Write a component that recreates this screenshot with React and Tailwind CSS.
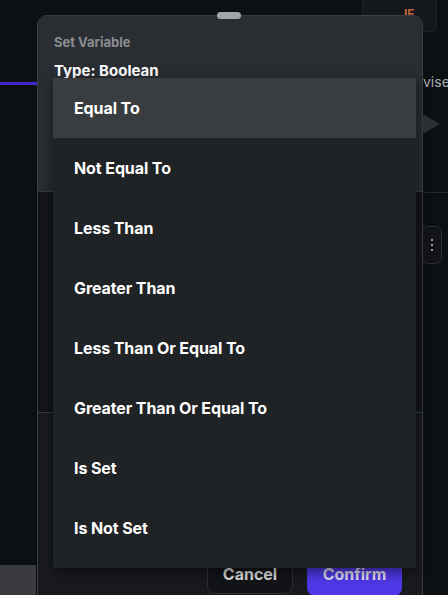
import React from 'react';

const OPTIONS = [
  'Equal To',
  'Not Equal To',
  'Less Than',
  'Greater Than',
  'Less Than Or Equal To',
  'Greater Than Or Equal To',
  'Is Set',
  'Is Not Set',
];

const App = () => {
  return (
    <div className="relative w-[448px] h-[595px] overflow-hidden bg-[#0d1013] font-['Inter',sans-serif]">
      {/* background page bits peeking out */}
      <div className="absolute left-0 top-[82px] w-[37px] h-[3px] bg-[#4328c9]" />
      <div className="absolute left-0 top-[565px] w-[36px] h-[30px] bg-[#3a3b3e]" />
      <div className="absolute left-[362px] top-0 w-[75px] h-[32px] rounded-b-md border-x border-b border-[#1f2226] bg-[#15181b]">
        <span className="absolute left-[41px] top-[5px] text-[12px] font-bold text-[#c2643f]">IF</span>
      </div>
      <span className="absolute left-[423px] top-[71px] text-[14px] text-[#a9abae]">vise</span>
      <div className="absolute left-[412px] top-[108px] w-0 h-0 border-y-[16px] border-y-transparent border-l-[28px] border-l-[#2c2f33]" />
      <div className="absolute left-[422px] top-[226px] w-[20px] h-[38px] rounded-md border border-[#2a2d31] bg-[#121417] flex flex-col items-center justify-center gap-[3px]">
        <span className="w-[2px] h-[2px] bg-[#9a9c9f]" />
        <span className="w-[2px] h-[2px] bg-[#9a9c9f]" />
        <span className="w-[2px] h-[2px] bg-[#9a9c9f]" />
      </div>
      <div className="absolute left-[423px] top-[192px] w-[25px] h-px bg-[#23262a]" />

      {/* modal */}
      <div className="absolute left-[37px] top-[15px] w-[386px] h-[600px] rounded-t-[10px] border border-[#3a3d41] bg-[#15181c] flex flex-col overflow-hidden">
        <div className="h-[175px] bg-[#2a2d31] px-[16px] pt-[17px]">
          <p className="text-[13px] font-bold text-[#8b8e93]">Set Variable</p>
          <p className="mt-[7px] text-[15px] font-bold text-white">Type: Boolean</p>
        </div>
        <div className="h-[221px] border-t border-[#3a3d41] bg-[#131519]" />
        <div className="flex-1 border-t border-[#3a3d41] bg-[#181a1e] flex items-start justify-end gap-[14px] pr-[20px] pt-[141px]">
          <button className="h-[40px] w-[86px] rounded-lg border border-[#3a2b2f] bg-[#131418] text-[16px] font-bold text-[#dcdcdc]">Cancel</button>
          <button className="-mt-[2px] h-[44px] w-[95px] rounded-lg bg-[#4f38e6] text-[16px] font-bold text-[#dcdcf0]">Confirm</button>
        </div>
      </div>
      <div className="absolute left-[217px] top-[12px] w-[24px] h-[7px] rounded-full bg-[#a3a5a8]" />

      {/* dropdown */}
      <div className="absolute left-[53px] top-[78px] w-[363px] h-[490px] bg-[#1f2326] shadow-[0_4px_12px_rgba(0,0,0,0.5)] flex flex-col">
        {OPTIONS.map((opt, i) => (
          <div
            key={opt}
            className={`h-[60px] shrink-0 flex items-center pl-[21px] text-[16px] font-bold tracking-[-0.1px] text-white ${i === 0 ? 'bg-[#3a3d40]' : ''}`}
          >
            {opt}
          </div>
        ))}
      </div>
    </div>
  );
};

export default App;
